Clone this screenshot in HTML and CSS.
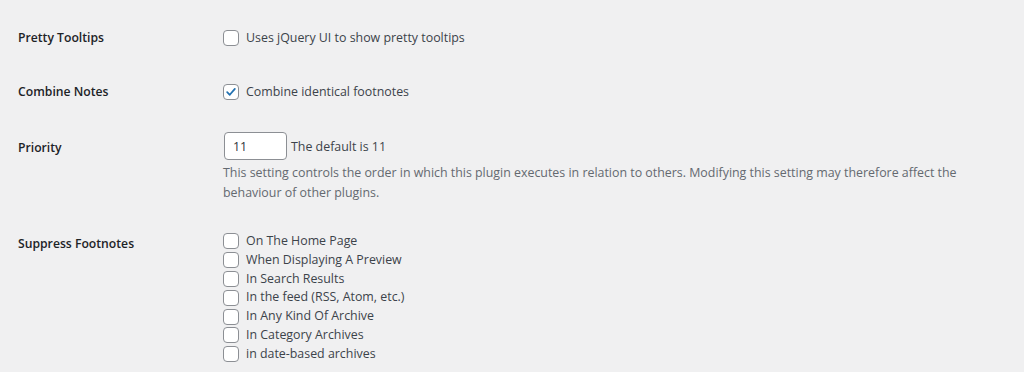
FILE: index.html
```html
<!DOCTYPE html>
<html lang="en">
<head>
  <meta charset="UTF-8">
  <title>Footnotes Settings</title>
  <link rel="stylesheet" href="styles.css">
</head>
<body>

  <div class="form-table">

    <div class="row">
      <div class="label">Pretty Tooltips</div>
      <div class="field">
        <label class="check"><span class="box"></span>Uses jQuery UI to show pretty tooltips</label>
      </div>
    </div>

    <div class="row">
      <div class="label">Combine Notes</div>
      <div class="field">
        <label class="check">
          <span class="box checked">
            <svg viewBox="0 0 16 16" width="16" height="16"><path d="M3.6 8.2 L6.6 11.2 L12.4 4.4" fill="none" stroke="#2271b1" stroke-width="2" stroke-linecap="round" stroke-linejoin="round"/></svg>
          </span>Combine identical footnotes
        </label>
      </div>
    </div>

    <div class="row row-priority">
      <div class="label">Priority</div>
      <div class="field">
        <div class="inline">
          <input class="small-text" type="text" value="11">
          <span>The default is 11</span>
        </div>
        <p class="description">This setting controls the order in which this plugin executes in relation to others. Modifying this setting may therefore affect the behaviour of other plugins.</p>
      </div>
    </div>

    <div class="row row-list">
      <div class="label">Suppress Footnotes</div>
      <div class="field list">
        <label class="check"><span class="box"></span>On The Home Page</label>
        <label class="check"><span class="box"></span>When Displaying A Preview</label>
        <label class="check"><span class="box"></span>In Search Results</label>
        <label class="check"><span class="box"></span>In the feed (RSS, Atom, etc.)</label>
        <label class="check"><span class="box"></span>In Any Kind Of Archive</label>
        <label class="check"><span class="box"></span>In Category Archives</label>
        <label class="check"><span class="box"></span>in date-based archives</label>
      </div>
    </div>

  </div>

</body>
</html>
```

FILE: styles.css
```css
body {
  margin: 0;
  background-color: #f0f0f1;
  font-family: "Segoe UI", "Open Sans", sans-serif;
  font-size: 12.4px;
  color: #3c434a;
}

.form-table {
  padding: 11px 18px 0;
}

.row {
  display: grid;
  grid-template-columns: 205px 1fr;
  padding: 17px 0 18px;
}

.label {
  font-size: 12.2px;
  font-weight: 600;
  color: #1d2327;
  line-height: 19px;
}

.field {
  line-height: 19px;
}

.check {
  display: flex;
  align-items: center;
}

.box {
  width: 14px;
  height: 14px;
  border: 1px solid #8c8f94;
  border-radius: 4px;
  background: #fff;
  margin-right: 7px;
  display: flex;
  align-items: center;
  justify-content: center;
  flex-shrink: 0;
}

.box svg {
  display: block;
}

.row-priority {
  padding: 13px 0 12px;
}

.row-priority .label {
  line-height: 28px;
  padding-top: 2px;
}

.inline {
  display: flex;
  align-items: center;
}

.small-text {
  width: 63px;
  height: 28px;
  box-sizing: border-box;
  border: 1px solid #8c8f94;
  border-radius: 4px;
  background: #fff;
  padding: 0 8px;
  font: inherit;
  color: #2c3338;
  margin: 0 4px 0 1px;
}

.description {
  margin: 3px 0 0;
  color: #646970;
  line-height: 20px;
}

.row-list .label {
  padding-top: 2px;
}

.list .check {
  line-height: 18.8px;
}
```
